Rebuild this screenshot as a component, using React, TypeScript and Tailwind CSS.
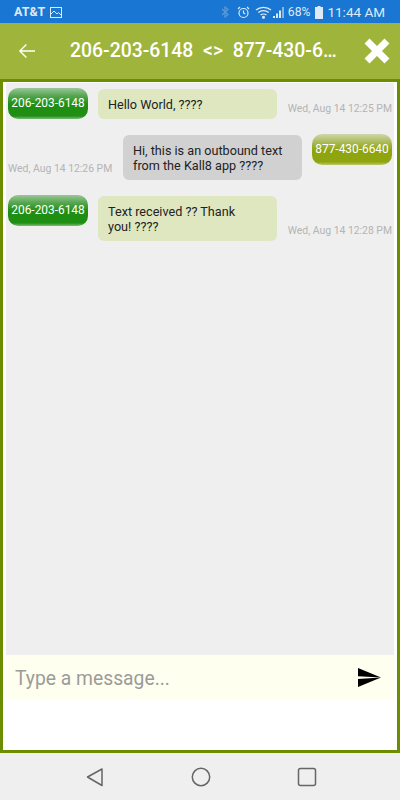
import { Fragment } from "react";

const font = { fontFamily: "Roboto, sans-serif" };

function Pill({ label, tone }: { label: string; tone: "green" | "olive" }) {
  return (
    <div
      className={
        "flex h-[31px] w-[80px] shrink-0 items-center justify-center rounded-[10px] text-[11.9px] text-white " +
        (tone === "green"
          ? "bg-[linear-gradient(#9cc699_0%,#55a64f_25%,#1f8f14_52%,#1f8f14_90%,#7cbc78_100%)]"
          : "bg-[linear-gradient(#cdd6ac_0%,#aebb5c_25%,#8fa50f_52%,#8fa50f_90%,#bcc96a_100%)]")
      }
    >
      {label}
    </div>
  );
}

function Stamp({ text }: { text: string }) {
  return <span className="block whitespace-nowrap text-[10.4px] leading-[14px] text-[#b4b4b4]">{text}</span>;
}

function Bubble({ lines, tone }: { lines: string[]; tone: "in" | "out" }) {
  return (
    <div
      className={
        "w-[179px] shrink-0 rounded-[6px] px-[10px] py-[7.5px] text-[12.65px] leading-[15px] text-[#222] " +
        (tone === "in" ? "bg-[#dfe7c0]" : "bg-[#d1d1d1]")
      }
    >
      {lines.map((l, i) => (
        <Fragment key={i}>
          {l}
          {i < lines.length - 1 && <br />}
        </Fragment>
      ))}
    </div>
  );
}

function Incoming({ lines, stamp }: { lines: string[]; stamp: string }) {
  return (
    <div className="flex items-start px-[2px]">
      <Pill label="206-203-6148" tone="green" />
      <div className="ml-[10px] mt-[1px]">
        <Bubble lines={lines} tone="in" />
      </div>
      <div className="ml-auto self-end translate-y-[-3px]">
        <Stamp text={stamp} />
      </div>
    </div>
  );
}

export default function App() {
  return (
    <div className="flex h-[800px] w-[400px] flex-col overflow-hidden bg-white" style={font}>
      {/* Status bar */}
      <div className="flex h-[23px] shrink-0 items-center bg-[#1976d2] pl-[14px] pr-[15px] pt-[1px] text-white">
        <span className="text-[12.5px] font-bold text-[#dfeaf6]">AT&amp;T</span>
        <svg className="ml-[5px]" width="12" height="11" viewBox="0 0 12 11" fill="none" stroke="#dfeaf6">
          <rect x="0.5" y="0.5" width="11" height="10" />
          <path d="M1 7l3-3 3 3 1.500-1.500L11 8" />
        </svg>
        <svg className="ml-auto" width="8" height="12" viewBox="0 0 8 12" fill="none" stroke="#5c9ad9" strokeWidth="1.200">
          <path d="M1 3l6 5.500L4 11V1l3 2.500L1 9" />
        </svg>
        <svg className="ml-[8px]" width="13" height="13" viewBox="0 0 13 13" fill="none" stroke="#dfeaf6" strokeWidth="1.200">
          <circle cx="6.500" cy="7" r="4.500" />
          <path d="M6.500 4.500V7l1.800 1M1 3l2-2M12 3l-2-2" />
        </svg>
        <svg className="ml-[5px]" width="17" height="13" viewBox="0 0 17 13" fill="none" stroke="#dfeaf6" strokeWidth="1.300">
          <path d="M1 4c4-3.600 11-3.600 15 0M3.300 6.500c2.800-2.400 7.600-2.400 10.400 0M5.600 9c1.500-1.200 4.300-1.200 5.800 0" />
          <circle cx="8.500" cy="11.300" r="0.900" fill="#dfeaf6" />
        </svg>
        <svg className="ml-[1px]" width="12" height="12" viewBox="0 0 12 12" fill="#dfeaf6">
          <path d="M0 12h2V10H0zM3 12h2V7.500H3zM6 12h2V4.500H6z" />
          <path d="M9 12h2V1H9z" opacity="0.55" />
        </svg>
        <span className="ml-[3px] text-[12.2px] text-[#dfeaf6]">68%</span>
        <svg className="ml-[5px]" width="8" height="13" viewBox="0 0 8 13" fill="#dfeaf6">
          <path d="M2.500 0h3v1H8v12H0V1h2.500z" />
        </svg>
        <span className="ml-[4px] text-[13.5px] text-[#dfeaf6]">11:44 AM</span>
      </div>

      {/* Title bar */}
      <div className="flex h-[56px] shrink-0 items-center bg-[#9fb43a] text-white">
        <svg className="ml-[15px]" width="24" height="24" viewBox="0 0 24 24" fill="#fff">
          <path d="M20 11.300H6.600l5.300-5.300-1-1L3.900 12l7 7 1-1-5.300-5.300H20z" />
        </svg>
        <div className="ml-[31px] w-[268px] truncate whitespace-pre text-[19.4px] font-medium">
          206-203-6148{"  "}
          <span>&lt;&gt;</span>
          {"  "}877-430-6640
        </div>
        <svg className="ml-[25px]" width="28" height="28" viewBox="0 0 28 28" fill="none" stroke="#fff" strokeWidth="7" strokeLinecap="square">
          <path d="M6.500 6.500l15 15M21.500 6.500l-15 15" />
        </svg>
      </div>

      {/* Framed chat area */}
      <div className="flex h-[674px] shrink-0 flex-col border-[3px] border-[#6b8e00] bg-white px-[3px] pt-[1px]">
        <div className="flex h-[572px] shrink-0 flex-col gap-[15px] bg-[#efefef] pt-[5px]">
          <Incoming lines={["Hello World, ????"]} stamp="Wed, Aug 14 12:25 PM" />
          <div className="flex items-start px-[2px]">
            <div className="self-end translate-y-[-4px]">
              <Stamp text="Wed, Aug 14 12:26 PM" />
            </div>
            <div className="ml-auto mt-[1px]">
              <Bubble lines={["Hi, this is an outbound text", "from the Kall8 app ????"]} tone="out" />
            </div>
            <div className="ml-[10px]">
              <Pill label="877-430-6640" tone="olive" />
            </div>
          </div>
          <Incoming lines={["Text received ?? Thank", "you! ????"]} stamp="Wed, Aug 14 12:28 PM" />
        </div>
        <div className="flex h-[45px] shrink-0 items-center bg-[#ffffef] pl-[9px] pr-[13px]">
          <span className="pt-[3px] text-[19.3px] text-[#9b9b9b]">Type a message...</span>
          <svg className="ml-auto" width="23" height="19" viewBox="0 0 23 19" fill="#000">
            <path d="M0 0l23 9.500L0 8.300z" />
            <path d="M0 19l23-9.500L0 11z" />
          </svg>
        </div>
      </div>

      {/* Nav bar */}
      <div className="flex flex-1 items-center bg-[#efefef] pl-[85px]">
        <svg width="20" height="20" viewBox="0 0 20 20" fill="none" stroke="#666" strokeWidth="1.500" strokeLinejoin="round">
          <path d="M17 2L2.500 10 17 18.500z" />
        </svg>
        <svg className="ml-[86px]" width="20" height="20" viewBox="0 0 20 20" fill="none" stroke="#666" strokeWidth="1.500">
          <circle cx="10" cy="10" r="8.700" />
        </svg>
        <svg className="ml-[86px]" width="20" height="20" viewBox="0 0 20 20" fill="none" stroke="#666" strokeWidth="1.500">
          <rect x="1.500" y="1.500" width="17" height="17" rx="2" />
        </svg>
      </div>
    </div>
  );
}
